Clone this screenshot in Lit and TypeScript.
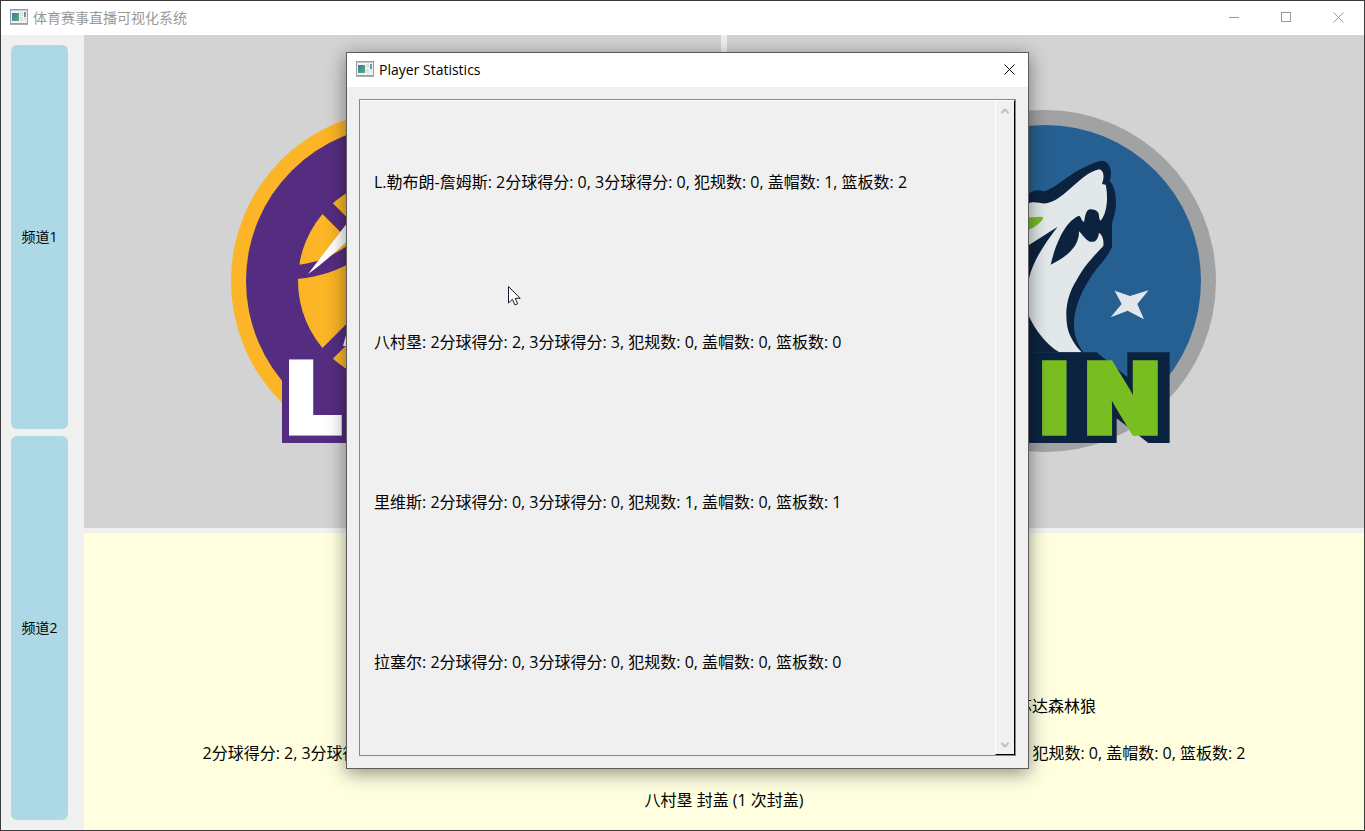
import { LitElement, html, css, svg } from "lit";
import { customElement, property } from "lit/decorators.js";

interface Stats {
  two: number;
  three: number;
  fouls: number;
  blocks: number;
  rebounds: number;
}

interface Player extends Stats {
  name: string;
}

const formatStats = (s: Stats) =>
  `2分球得分: ${s.two}, 3分球得分: ${s.three}, 犯规数: ${s.fouls}, 盖帽数: ${s.blocks}, 篮板数: ${s.rebounds}`;

const PLAYERS: Player[] = [
  { name: "L.勒布朗-詹姆斯", two: 0, three: 0, fouls: 0, blocks: 1, rebounds: 2 },
  { name: "八村塁", two: 2, three: 3, fouls: 0, blocks: 0, rebounds: 0 },
  { name: "里维斯", two: 0, three: 0, fouls: 1, blocks: 0, rebounds: 1 },
  { name: "拉塞尔", two: 0, three: 0, fouls: 0, blocks: 0, rebounds: 0 },
];

const appIcon = html`<svg width="18" height="16" viewBox="0 0 18 16" aria-hidden="true">
  <defs>
    <linearGradient id="screen" x1="0" y1="0" x2="1" y2="1">
      <stop offset="0" stop-color="#3f74a8" />
      <stop offset="1" stop-color="#58b26c" />
    </linearGradient>
  </defs>
  <rect x="0.5" y="0.5" width="17" height="14" fill="#f4f4f4" stroke="#9a9fa5" />
  <path d="M1 1.5H17" stroke="#c3c7cb" />
  <rect x="2" y="4" width="7" height="8" fill="url(#screen)" />
  <rect x="10" y="3" width="3" height="4" fill="#e0e0e0" />
  <rect x="10" y="8" width="3" height="4" fill="#e0e0e0" />
  <rect x="14" y="3" width="2" height="9" fill="#e4e4e4" />
  <rect x="14" y="3" width="2" height="5" fill="#5a9fa5" />
  <path d="M0 15.5H18" stroke="#a9adb2" />
</svg>`;

const closeGlyph = svg`<path d="M0.5 0.5L10.5 10.5M10.5 0.5L0.5 10.5" fill="none" stroke="currentColor" />`;

@customElement("team-logo")
class TeamLogo extends LitElement {
  @property() team = "lal";

  static styles = css`
    :host {
      display: block;
    }
    .logo {
      display: block;
      width: 342px;
      height: 342px;
    }
    .letters {
      font-family: Inter, "Open Sans", sans-serif;
      font-weight: 900;
    }
  `;

  private lakers() {
    return html`<svg class="logo" viewBox="0 0 342 342" role="img" aria-label="LAL">
      <circle cx="171" cy="171" r="171" fill="#fbb526" />
      <circle cx="171" cy="171" r="156" fill="#552d80" />
      <circle cx="171" cy="171" r="104" fill="#fbb526" />
      <path d="M85 87L171 173M85 255L171 169" stroke="#552d80" stroke-width="15" />
      <path d="M66 155C90 152 105 145 130 126V147C108 160 90 167 66 169Z" fill="#552d80" />
      <path d="M77 164L130 95V118C108 139 95 151 77 164Z" fill="#ffffff" />
      <path d="M112 236L118 214V236Z" fill="#ffffff" />
      <path d="M51 242H94V299H291V333H51Z" fill="#552d80" />
      <g class="letters" font-size="97" fill="#ffffff" stroke="#ffffff" stroke-width="5">
        <text x="56" y="323">L</text>
        <text x="125" y="323">AL</text>
      </g>
    </svg>`;
  }

  private wolves() {
    return html`<svg class="logo" viewBox="0 0 342 342" role="img" aria-label="MIN">
      <circle cx="171" cy="171" r="171" fill="#a0a2a3" />
      <circle cx="171" cy="171" r="156" fill="#266092" />
      <g transform="translate(136 -10) scale(0.3333)">
        <path
          fill="#0c2340"
          d="M0 300L55 282C70 270 88 268 100 274C140 268 180 210 270 183C290 178 302 200 303 215C302 230 302 238 298 243C316 256 320 300 317 325C314 350 305 365 306 380V440C290 480 260 500 237 540C205 590 190 640 192 680C193 710 205 735 220 757H0Z"
        />
        <path
          fill="#e2e7ea"
          d="M0 312L55 310C75 302 90 312 110 310C165 300 210 220 268 208C282 212 284 230 276 252L287 254C294 285 294 335 272 362C264 355 270 340 262 335C255 328 240 325 232 332C224 345 225 355 222 366C214 362 214 352 208 347C170 360 140 420 122 494C170 470 208 440 207 394C215 400 225 420 240 425C255 428 264 420 267 398C278 405 282 420 280 438C250 470 225 495 200 540C168 590 165 640 172 680C178 710 195 735 215 757H148C110 735 75 690 55 645H0Z"
        />
        <path fill="#0c2340" d="M30 452L143 380C105 430 70 480 57 535L30 590Z" />
        <path fill="#78be21" d="M40 353L94 350C102 352 100 358 92 365C80 378 65 385 55 391L40 396Z" />
        <path
          fill="#e2e7ea"
          d="M314 572L360 588L416 571L382 612L402 658L353 632L302 652L335 612Z"
        />
        <path
          fill="#0c2340"
          d="M-270 757H260L352 831V757H479V1029H415L320 955V1029H-270Z"
        />
        <g class="letters" font-size="290" fill="#78be21" stroke="#78be21" stroke-width="16">
          <text x="-230" y="999">M</text>
          <text x="133" y="999" text-anchor="middle">I</text>
          <text x="337" y="999" text-anchor="middle">N</text>
        </g>
      </g>
    </svg>`;
  }

  render() {
    return this.team === "lal" ? this.lakers() : this.wolves();
  }
}

@customElement("stats-dialog")
class StatsDialog extends LitElement {
  @property({ attribute: false }) players: Player[] = [];

  static styles = css`
    :host {
      display: flex;
      flex-direction: column;
      box-sizing: border-box;
      border: 1px solid #5c5c5c;
      background: #f0f0f0;
      box-shadow: 0 4px 18px rgba(0, 0, 0, 0.45);
      color: #000;
    }
    .bar {
      display: flex;
      align-items: center;
      gap: 5px;
      box-sizing: border-box;
      height: 34px;
      padding: 0 0 2px 9px;
      background: #fff;
    }
    .title {
      flex: 1;
      margin: 0;
      font-size: 14px;
      font-weight: 400;
    }
    button {
      display: flex;
      align-items: center;
      justify-content: center;
      padding: 0;
      border: 0;
      background: none;
      color: inherit;
    }
    .close {
      width: 37px;
      height: 32px;
    }
    .frame {
      display: flex;
      flex: 1;
      margin: 12px;
      border: 1px solid #828790;
    }
    .list {
      flex: 1;
      margin: 0;
      padding: 0 14px;
      list-style: none;
      border-top: 1px solid #fff;
    }
    .row {
      display: flex;
      align-items: center;
      height: 160px;
      font-size: 16px;
      white-space: nowrap;
    }
    .scroll {
      display: flex;
      flex-direction: column;
      justify-content: space-between;
      width: 18px;
      border: 1px solid #fff;
      border-right: 1px solid #000;
      border-bottom: 1px solid #000;
      color: #bfbfbf;
    }
    .step {
      height: 19px;
    }
  `;

  render() {
    return html`
      <header class="bar">
        ${appIcon}
        <h2 class="title">Player Statistics</h2>
        <button class="close" aria-label="Close">
          <svg width="11" height="11" viewBox="0 0 11 11">${closeGlyph}</svg>
        </button>
      </header>
      <div class="frame">
        <ul class="list">
          ${this.players.map((p) => html`<li class="row">${p.name}: ${formatStats(p)}</li>`)}
        </ul>
        <div class="scroll">
          <button class="step" aria-label="Scroll up">
            <svg width="8" height="6" viewBox="0 0 8 6">
              <path d="M0.5 5L4 1.5L7.5 5" fill="none" stroke="currentColor" stroke-width="2" />
            </svg>
          </button>
          <button class="step" aria-label="Scroll down">
            <svg width="8" height="6" viewBox="0 0 8 6">
              <path d="M0.5 1L4 4.5L7.5 1" fill="none" stroke="currentColor" stroke-width="2" />
            </svg>
          </button>
        </div>
      </div>
    `;
  }
}

@customElement("app-root")
class AppRoot extends LitElement {
  static styles = css`
    :host {
      display: block;
      font-family: "Open Sans", "Noto Sans CJK SC", sans-serif;
      color: #000;
    }
    .window {
      position: relative;
      display: flex;
      flex-direction: column;
      box-sizing: border-box;
      height: 100vh;
      border: 1px solid #3b3b3d;
      background: #f0f0f0;
      overflow: hidden;
    }
    .bar {
      display: flex;
      align-items: center;
      gap: 5px;
      box-sizing: border-box;
      height: 34px;
      padding: 0 0 2px 9px;
      background: #fff;
      color: #999;
    }
    .title {
      flex: 1;
      margin: 0;
      font-size: 14px;
      font-weight: 400;
    }
    button {
      display: flex;
      align-items: center;
      justify-content: center;
      padding: 0;
      border: 0;
      background: none;
      color: inherit;
      font-family: inherit;
    }
    .controls {
      display: flex;
    }
    .control {
      width: 52px;
      height: 32px;
    }
    .body {
      display: flex;
      flex: 1;
      min-height: 0;
    }
    .channels {
      display: flex;
      flex-direction: column;
      gap: 7px;
      box-sizing: border-box;
      width: 83px;
      padding: 10px 16px 10px 10px;
    }
    .channel {
      flex: 1;
      padding-bottom: 3px;
      border-radius: 6px;
      background: #add8e6;
      font-size: 14px;
      color: #000;
    }
    .main {
      display: grid;
      flex: 1;
      grid-template-rows: 83fr 50fr;
      gap: 5px;
      min-width: 0;
    }
    .teams {
      display: grid;
      grid-template-columns: 1fr 1fr;
      gap: 6px;
      min-height: 0;
    }
    .team {
      display: flex;
      align-items: center;
      justify-content: center;
      padding: 0 2px 1px 0;
      background: #d3d3d3;
    }
    .board {
      display: grid;
      grid-template-columns: 1fr 1fr;
      align-content: end;
      gap: 23px 6px;
      padding: 0 11px 18px;
      background: #ffffe0;
      font-size: 16px;
      line-height: 24px;
      text-align: center;
      white-space: nowrap;
    }
    .cell {
      margin: 0;
    }
    .wide {
      grid-column: 1 / -1;
    }
    .dialog {
      position: absolute;
      left: 345px;
      top: 51px;
      width: 683px;
      height: 717px;
    }
    .cursor {
      position: absolute;
      left: 507px;
      top: 285px;
    }
  `;

  render() {
    return html`
      <div class="window">
        <header class="bar">
          ${appIcon}
          <h1 class="title">体育赛事直播可视化系统</h1>
          <div class="controls">
            <button class="control" aria-label="Minimize">
              <svg width="10" height="11" viewBox="0 0 10 11">
                <path d="M0 5.5H10" stroke="currentColor" />
              </svg>
            </button>
            <button class="control" aria-label="Maximize">
              <svg width="10" height="10" viewBox="0 0 10 10">
                <rect x="0.5" y="0.5" width="9" height="9" fill="none" stroke="currentColor" />
              </svg>
            </button>
            <button class="control" aria-label="Close">
              <svg width="11" height="11" viewBox="0 0 11 11">${closeGlyph}</svg>
            </button>
          </div>
        </header>
        <div class="body">
          <nav class="channels">
            <button class="channel">频道1</button>
            <button class="channel">频道2</button>
          </nav>
          <main class="main">
            <section class="teams">
              <div class="team"><team-logo team="lal"></team-logo></div>
              <div class="team"><team-logo team="min"></team-logo></div>
            </section>
            <section class="board">
              <p class="cell">洛杉矶湖人</p>
              <p class="cell">明尼苏达森林狼</p>
              <p class="cell">
                ${formatStats({ two: 2, three: 3, fouls: 1, blocks: 1, rebounds: 3 })}
              </p>
              <p class="cell">
                ${formatStats({ two: 0, three: 0, fouls: 0, blocks: 0, rebounds: 2 })}
              </p>
              <p class="cell wide">八村塁 封盖 (1 次封盖)</p>
            </section>
          </main>
        </div>
        <stats-dialog class="dialog" .players=${PLAYERS}></stats-dialog>
        <svg class="cursor" width="13" height="20" viewBox="0 0 13 20" aria-hidden="true">
          <path
            d="M0.5 0.5V17L4.3 13.3L7 19L9.6 17.8L7.2 12.3H12.2Z"
            fill="#fff"
            stroke="#1a1a2a"
          />
        </svg>
      </div>
    `;
  }
}
